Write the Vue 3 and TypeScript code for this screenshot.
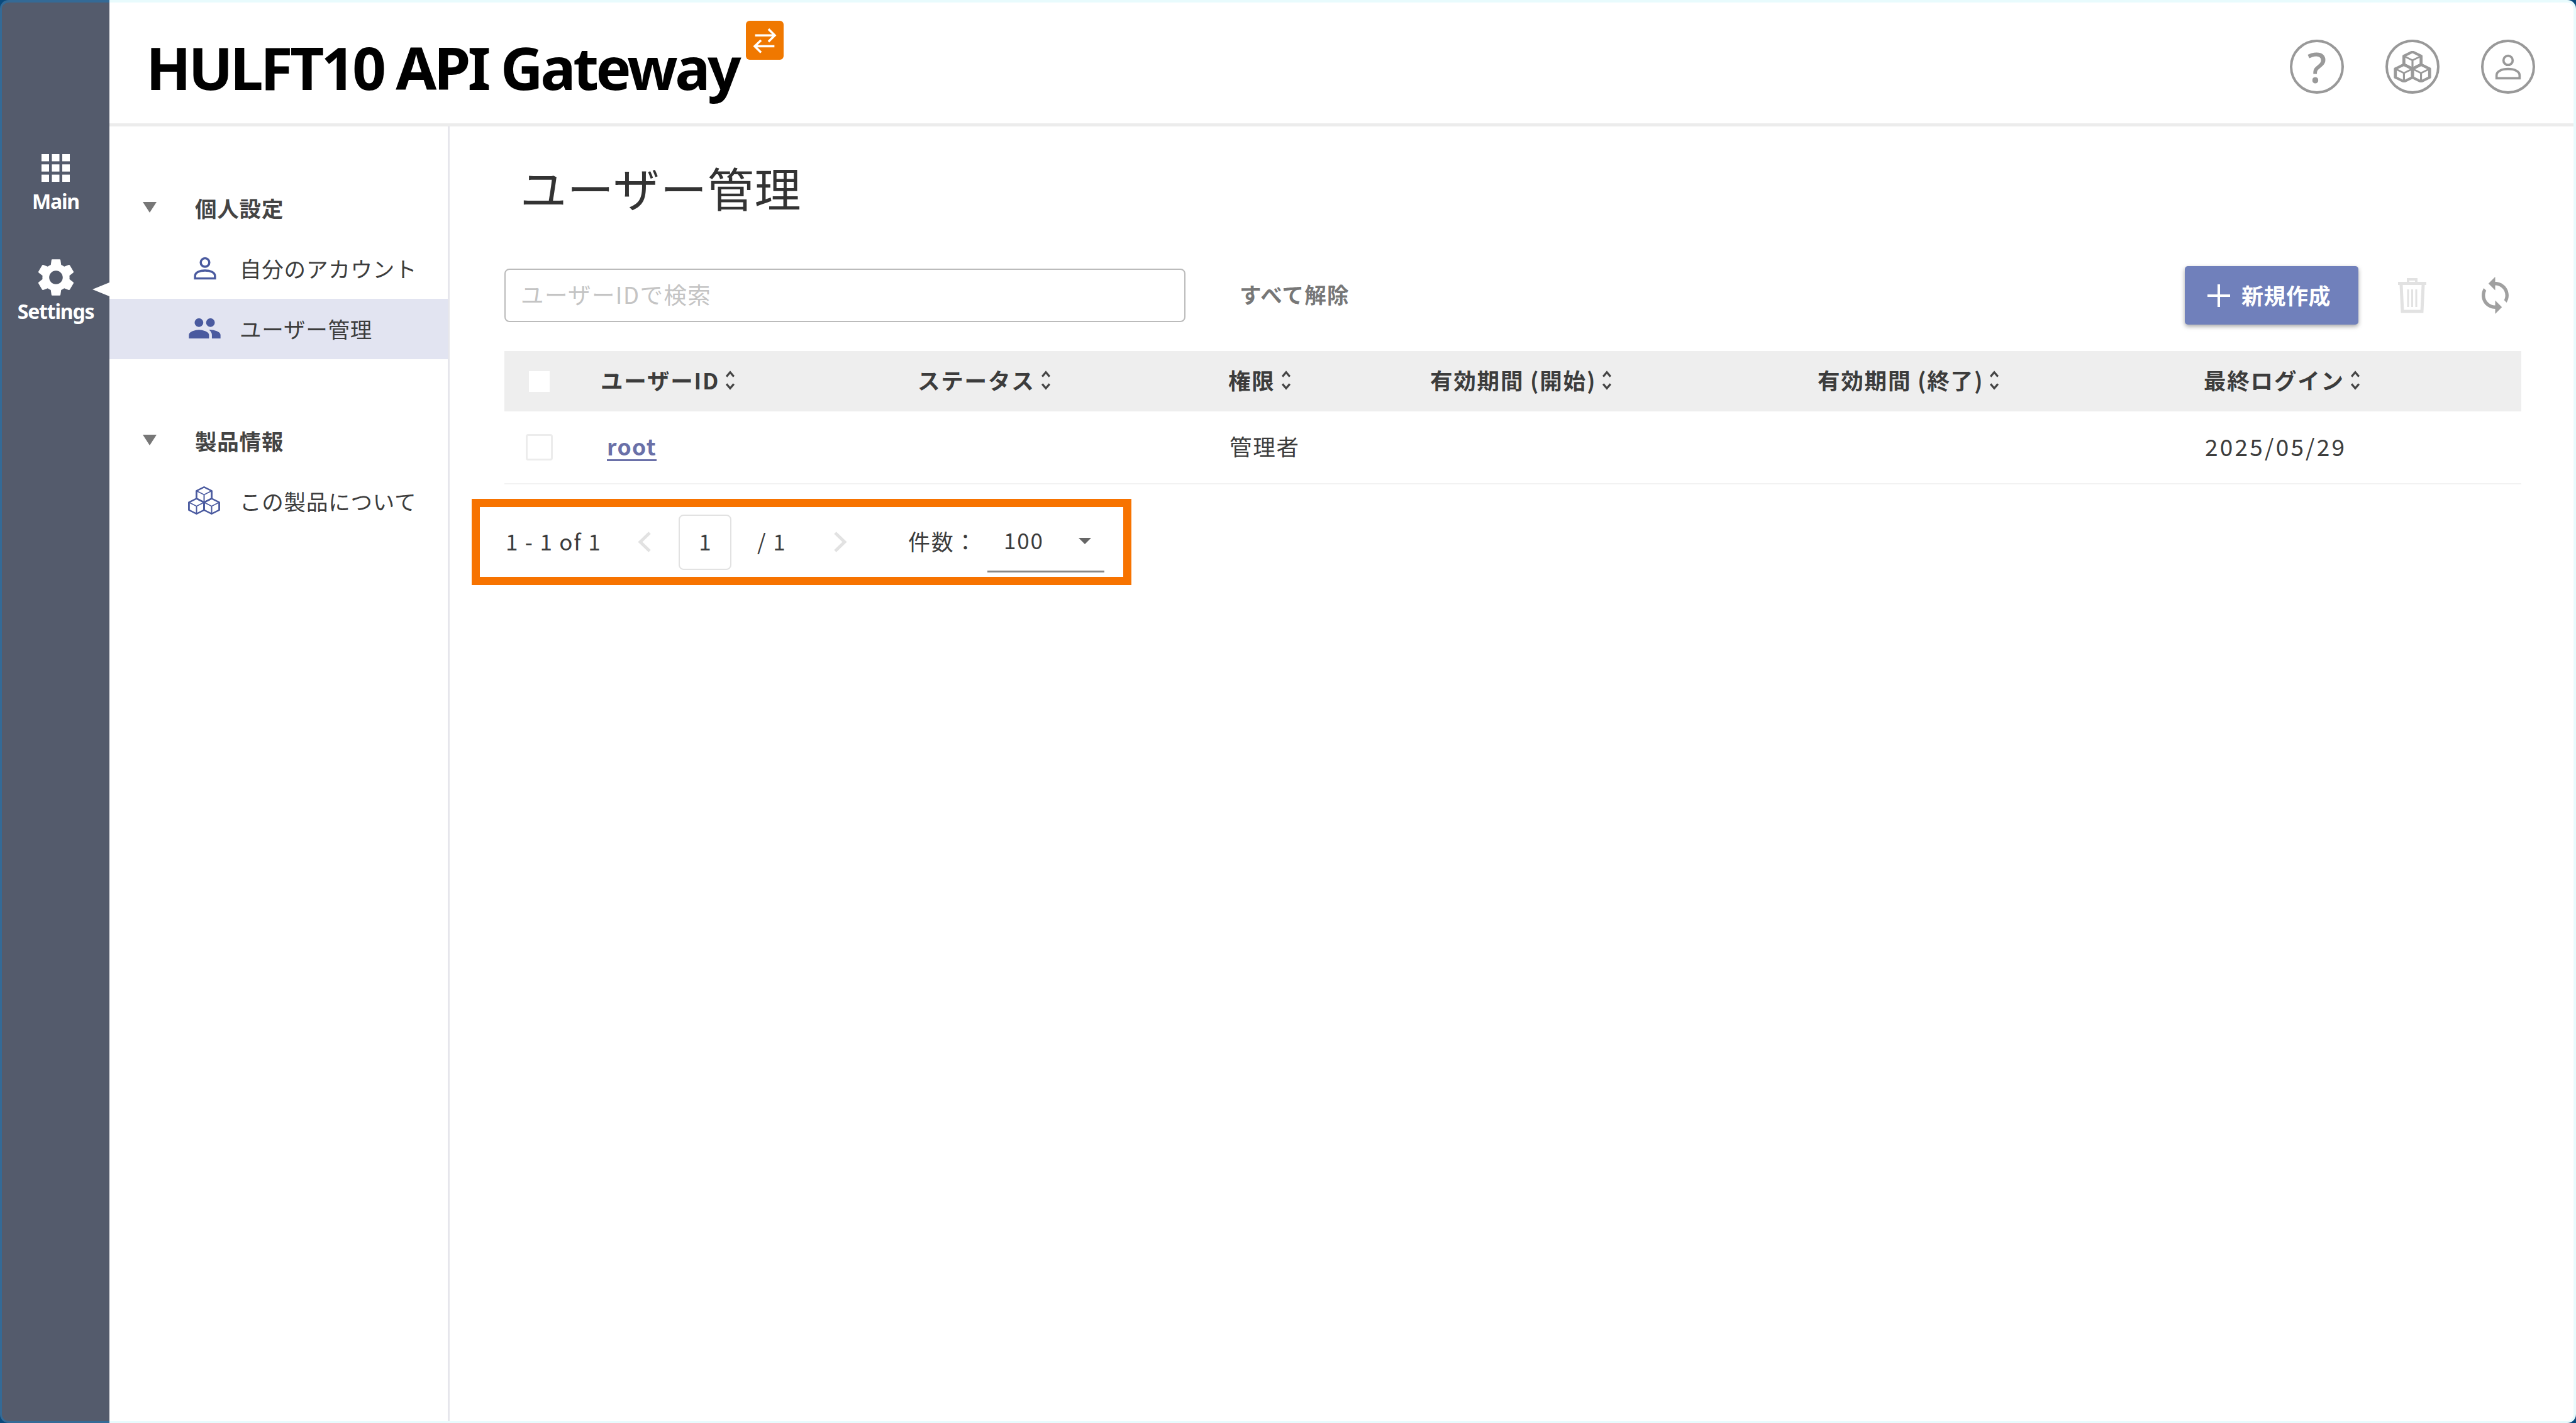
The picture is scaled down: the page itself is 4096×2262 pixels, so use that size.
<script setup lang="ts">
interface Column {
  label: string;
}

const columns: Column[] = [
  { label: "ユーザーID" },
  { label: "ステータス" },
  { label: "権限" },
  { label: "有効期間 (開始)" },
  { label: "有効期間 (終了)" },
  { label: "最終ログイン" },
];

// three cubes, stacked like a pyramid
const cubes = [
  { x: 20, y: 12 },
  { x: 11.4, y: 27 },
  { x: 28.6, y: 27 },
];
const r = 10;
const w = r * 0.866;

function hex(c: { x: number; y: number }) {
  return `M${c.x} ${c.y - r}L${c.x + w} ${c.y - r / 2}V${c.y + r / 2}L${c.x} ${c.y + r}L${c.x - w} ${c.y + r / 2}V${c.y - r / 2}Z`;
}
function inner(c: { x: number; y: number }) {
  return `M${c.x - w} ${c.y - r / 2}L${c.x} ${c.y}L${c.x + w} ${c.y - r / 2}M${c.x} ${c.y}V${c.y + r}`;
}

const gridCells = [0, 1, 2].flatMap((row) => [0, 1, 2].map((col) => ({ x: col * 16.5, y: row * 16.3 })));
const gear =
  "M19.14 12.94c.04-.3.06-.61.06-.94 0-.32-.02-.64-.07-.94l2.03-1.58c.18-.14.23-.41.12-.61l-1.92-3.32c-.12-.22-.37-.29-.59-.22l-2.39.96c-.5-.38-1.03-.7-1.62-.94l-.36-2.54c-.04-.24-.24-.41-.48-.41h-3.84c-.24 0-.43.17-.47.41l-.36 2.54c-.59.24-1.13.57-1.62.94l-2.39-.96c-.22-.08-.47 0-.59.22L2.74 8.87c-.12.21-.08.47.12.61l2.03 1.58c-.05.3-.09.63-.09.94s.02.64.07.94l-2.03 1.58c-.18.14-.23.41-.12.61l1.92 3.32c.12.22.37.29.59.22l2.39-.96c.5.38 1.03.7 1.62.94l.36 2.54c.05.24.24.41.48.41h3.84c.24 0 .44-.17.47-.41l.36-2.54c.59-.24 1.13-.56 1.62-.94l2.39.96c.22.08.47 0 .59-.22l1.92-3.32c.12-.22.07-.47-.12-.61l-2.01-1.58zM12 15.6c-1.98 0-3.6-1.62-3.6-3.6s1.62-3.6 3.6-3.6 3.6 1.62 3.6 3.6-1.62 3.6-3.6 3.6z";
const people =
  "M16 11c1.66 0 2.99-1.34 2.99-3S17.66 5 16 5c-1.66 0-3 1.34-3 3s1.34 3 3 3zm-8 0c1.66 0 2.99-1.34 2.99-3S9.66 5 8 5C6.34 5 5 6.34 5 8s1.34 3 3 3zm0 2c-2.33 0-7 1.17-7 3.5V19h14v-2.5c0-2.33-4.67-3.5-7-3.5zm8 0c-.29 0-.62.02-.97.05 1.16.84 1.97 1.97 1.97 3.45V19h6v-2.5c0-2.33-4.67-3.5-7-3.5z";
const sync =
  "M12 4V1L8 5l4 4V6c3.31 0 6 2.69 6 6 0 1.01-.25 1.97-.7 2.8l1.46 1.46C19.54 15.03 20 13.57 20 12c0-4.42-3.58-8-8-8zm0 14c-3.31 0-6-2.69-6-6 0-1.01.25-1.97.7-2.8L5.24 7.74C4.46 8.97 4 10.43 4 12c0 4.42 3.58 8 8 8v3l4-4-4-4v3z";
</script>

<template>
  <div class="frame">
    <aside class="rail">
      <div class="rail-item main-item">
        <svg class="grid-icon" viewBox="0 0 45 44">
          <rect v-for="(c, i) in gridCells" :key="i" :x="c.x" :y="c.y" width="12" height="11.4" fill="#fff" />
        </svg>
        <span>Main</span>
      </div>
      <div class="rail-item settings-item">
        <svg class="gear-icon" viewBox="2.5 2 19 20"><path :d="gear" fill="#fff" /></svg>
        <span>Settings</span>
        <i class="pointer"></i>
      </div>
    </aside>

    <div class="main">
      <header class="topbar">
        <div class="logo">
          <span class="logo-text">HULFT10 API Gateway</span>
          <span class="badge">
            <svg viewBox="0 0 40 44" fill="none" stroke="#fff" stroke-width="3">
              <path d="M7 15.5H33M25 7l8.5 8.5L25 24" />
              <path d="M33 30H7M15 22l-8.500 8L15 38.500" />
            </svg>
          </span>
        </div>
        <div class="top-icons">
          <div class="circle"><span class="question">?</span></div>
          <div class="circle">
            <svg class="cubes-top" viewBox="1 1 38 37" preserveAspectRatio="none" fill="none" stroke="#999" stroke-width="3" stroke-linejoin="round">
              <template v-for="(c, i) in cubes" :key="i">
                <path :d="hex(c)" />
                <path :d="inner(c)" stroke-width="2" />
              </template>
            </svg>
          </div>
          <div class="circle">
            <svg class="person-top" viewBox="0 0 24 24" fill="none" stroke="#999" stroke-width="2">
              <circle cx="12" cy="6.500" r="4" />
              <path d="M2 22v-2.500c0-3.500 4.500-5.500 10-5.500s10 2 10 5.500V22z" />
            </svg>
          </div>
        </div>
      </header>

      <div class="body">
        <nav class="side">
          <div class="side-title"><i class="caret"></i>個人設定</div>
          <div class="side-row">
            <span class="side-icon">
              <svg class="person" viewBox="0 0 24 24" fill="none" stroke="#4a5a9f" stroke-width="2.200">
                <circle cx="12" cy="6.500" r="4.300" />
                <path d="M2 22.500v-2.500c0-3.500 4.500-5.500 10-5.500s10 2 10 5.500v2.500z" />
              </svg>
            </span>
            自分のアカウント
          </div>
          <div class="side-row active">
            <span class="side-icon">
              <svg class="people" viewBox="1 5 22 14"><path :d="people" fill="#4a5a9f" /></svg>
            </span>
            ユーザー管理
          </div>
          <div class="side-title second"><i class="caret"></i>製品情報</div>
          <div class="side-row">
            <span class="side-icon">
              <svg class="cubes" viewBox="1 1 38 37" preserveAspectRatio="none" fill="none" stroke="#4a5a9f" stroke-width="2" stroke-linejoin="round">
                <template v-for="(c, i) in cubes" :key="i">
                  <path :d="hex(c)" />
                  <path :d="inner(c)" stroke-width="1.400" />
                </template>
              </svg>
            </span>
            この製品について
          </div>
        </nav>

        <main class="content">
          <h1>ユーザー管理</h1>

          <div class="toolbar">
            <input class="search" type="text" placeholder="ユーザーIDで検索" />
            <span class="clear">すべて解除</span>
            <button class="create">
              <svg viewBox="0 0 36 36" stroke="#fff" stroke-width="4"><path d="M18 0V36M0 18H36" /></svg>
              <span class="create-label">新規作成</span>
            </button>
            <svg class="trash" viewBox="0 0 47 57" fill="none" stroke="#e2e2e2">
              <path d="M17 7V3h13v4" stroke-width="4" />
              <path d="M1 9.500h45" stroke-width="5" />
              <path d="M6 12l2 42h31l2-42" stroke-width="5" />
              <path d="M17 19v28M23.500 19v28M30 19v28" stroke-width="3" />
            </svg>
            <svg class="refresh" viewBox="4 1 16 22"><path :d="sync" fill="#a0a0a0" /></svg>
          </div>

          <div class="table">
            <div class="row head">
              <div class="check-cell"><span class="check plain"></span></div>
              <div v-for="col in columns" :key="col.label" class="cell">
                <span class="lift">{{ col.label }}</span>
                <svg class="sort" viewBox="0 0 18 31" fill="none" stroke="#444" stroke-width="3">
                  <path d="M3.500 10L9 3.500l5.500 6.500M3.500 21L9 27.500l5.500-6.500" />
                </svg>
              </div>
            </div>
            <div class="row line">
              <div class="check-cell"><span class="check"></span></div>
              <div class="cell"><a class="link lift">root</a></div>
              <div class="cell"></div>
              <div class="cell nudge"><span class="lift">管理者</span></div>
              <div class="cell"></div>
              <div class="cell"></div>
              <div class="cell nudge date"><span class="lift">2025/05/29</span></div>
            </div>
          </div>

          <div class="pager">
            <span class="lift">1 - 1 of 1</span>
            <svg class="chev" viewBox="0 0 23 33" fill="none" stroke="#e2e2e2" stroke-width="5"><path d="M20 2L5 16.500 20 31" /></svg>
            <span><input class="page" type="text" value="1" /></span>
            <span class="lift">/ 1</span>
            <svg class="chev" viewBox="0 0 23 33" fill="none" stroke="#e2e2e2" stroke-width="5"><path d="M3 2l15 14.500L3 31" /></svg>
            <span class="lift">件数：</span>
            <div class="select"><span class="lift">100</span><i class="caret small"></i></div>
          </div>
        </main>
      </div>
    </div>
  </div>
</template>

<style scoped>
.frame {
  width: 4096px;
  height: 2262px;
  display: flex;
  background: #0b4a7c;
  overflow: hidden;
  font-family: "Noto Sans CJK JP", "Noto Sans", sans-serif;
  color: #3c3c3c;
}

.lift {
  margin-bottom: 5px;
}

.rail {
  width: 174px;
  flex: none;
  box-sizing: border-box;
  padding-top: 241px;
  background: #545b6c;
  border: solid #346a96;
  border-width: 4px 0 3px 3px;
  border-radius: 14px 0 0 14px;
  display: flex;
  flex-direction: column;
  font-family: "Noto Sans", sans-serif;
  font-weight: 700;
  color: #fff;
}

.rail-item {
  position: relative;
  display: flex;
  flex-direction: column;
  align-items: center;
  font-size: 32px;
  letter-spacing: -1.2px;
  line-height: 40px;
}

.grid-icon {
  width: 45px;
  height: 44px;
  margin-bottom: 11px;
}

.settings-item {
  margin-top: 71px;
}

.gear-icon {
  width: 58px;
  height: 60px;
  margin-bottom: 4px;
}

.pointer {
  position: absolute;
  right: 0;
  top: 38px;
  border-style: solid;
  border-width: 11px 27px 11px 0;
  border-color: transparent #fff transparent transparent;
}

.main {
  flex: 1;
  min-width: 0;
  display: flex;
  flex-direction: column;
  background: #fff;
  border: solid #e8fbfd;
  border-width: 4px 4px 3px 0;
  border-radius: 0 14px 14px 0;
}

.topbar {
  height: 192px;
  flex: none;
  border-bottom: 5px solid #ececec;
  padding: 0 61px 0 58px;
  display: flex;
  align-items: center;
  justify-content: space-between;
}

.logo {
  display: flex;
  align-items: flex-start;
  align-self: flex-start;
  padding-top: 29px;
}

.logo-text {
  margin-top: 19px;
  font-family: "Noto Sans", sans-serif;
  font-weight: 700;
  font-size: 94px;
  line-height: 110px;
  letter-spacing: -4.5px;
  color: #000;
  white-space: nowrap;
}

.badge {
  width: 60px;
  height: 62px;
  margin-left: 12px;
  border-radius: 6px;
  background: #f07800;
  display: flex;
  align-items: center;
  justify-content: center;
}

.badge svg {
  width: 48px;
  height: 52px;
}

.top-icons {
  display: flex;
  gap: 66px;
  margin-top: 12px;
}

.circle {
  width: 86px;
  height: 86px;
  box-sizing: border-box;
  border: 4px solid #999;
  border-radius: 50%;
  display: flex;
  align-items: center;
  justify-content: center;
}

.question {
  font-family: "Noto Sans", sans-serif;
  font-size: 68px;
  font-weight: 500;
  line-height: 1;
  color: #999;
}

.cubes-top {
  width: 60px;
  height: 50px;
}

.person-top {
  width: 44px;
  height: 48px;
}

.body {
  flex: 1;
  min-height: 0;
  display: flex;
}

.side {
  width: 541px;
  flex: none;
  box-sizing: border-box;
  padding-top: 82px;
  border-right: 3px solid #e6e6ec;
  font-size: 34.5px;
  letter-spacing: 0.8px;
}

.side-title {
  height: 96px;
  box-sizing: border-box;
  padding: 0 0 3px 53px;
  display: flex;
  align-items: center;
  font-weight: 700;
  color: #444;
}

.side-title.second {
  margin-top: 82px;
}

.caret {
  width: 0;
  height: 0;
  border-style: solid;
  border-width: 17px 11.5px 0;
  border-color: #777 transparent transparent;
  margin-right: 61px;
}

.caret.small {
  border-width: 10px 10.5px 0;
  margin: 0 0 0 auto;
  border-top-color: #666;
}

.side-row {
  height: 96px;
  box-sizing: border-box;
  padding: 0 0 3px 126px;
  display: flex;
  align-items: center;
}

.side-row.active {
  background: #e2e4f1;
}

.side-icon {
  width: 81px;
  flex: none;
  display: flex;
  align-items: center;
}

.person {
  width: 38px;
  height: 38px;
  margin-left: 7px;
}

.people {
  width: 51px;
  height: 32px;
}

.cubes {
  width: 53px;
  height: 45px;
  margin-left: -2px;
}

.content {
  flex: 1;
  min-width: 0;
  box-sizing: border-box;
  padding: 46px 83px 0 87px;
}

h1 {
  margin: 0 0 0 25px;
  height: 100px;
  font-size: 74px;
  line-height: 100px;
  font-weight: 400;
  letter-spacing: 0.8px;
  color: #333;
}

.toolbar {
  margin-top: 76px;
  height: 93px;
  display: flex;
  align-items: center;
  padding: 0 19px 0 0;
}

.search {
  width: 1083px;
  height: 85px;
  box-sizing: border-box;
  padding: 0 24px 4px;
  border: 2px solid #bbb;
  border-radius: 8px;
  font-family: inherit;
  font-size: 36.5px;
  letter-spacing: 1.4px;
  outline: none;
}

.search::placeholder {
  color: #c4c4c4;
}

.clear {
  margin: 0 0 5px 86px;
  font-size: 34.5px;
  letter-spacing: 1.2px;
  font-weight: 700;
  color: #777;
}

.create {
  margin-left: auto;
  width: 276px;
  height: 93px;
  box-sizing: border-box;
  padding: 0 0 0 36px;
  border: none;
  border-radius: 5px;
  background: #7080bb;
  box-shadow: 0 3px 7px rgba(0, 0, 0, 0.35);
  display: flex;
  align-items: center;
  gap: 18px;
  font-family: inherit;
  font-size: 35px;
  font-weight: 700;
  letter-spacing: 0.5px;
  color: #fff;
}

.create svg {
  width: 36px;
  height: 36px;
}

.create-label {
  margin-bottom: 3px;
}

.trash {
  width: 47px;
  height: 57px;
  margin-left: 62px;
}

.refresh {
  width: 45px;
  height: 59px;
  margin-left: 86px;
}

.table {
  margin-top: 42px;
}

.row {
  display: grid;
  grid-template-columns: 153px 504px 494px 321px 616px 614px 1fr;
  align-items: center;
}

.head {
  height: 96px;
  background: #eee;
  font-weight: 700;
}

.line {
  height: 114px;
  border-bottom: 2px solid #f2f2f2;
}

.cell {
  display: flex;
  align-items: center;
  font-size: 35.5px;
  letter-spacing: 1.8px;
  white-space: nowrap;
}

.nudge {
  padding-left: 2px;
}

.date {
  font-size: 37px;
  letter-spacing: 3.200px;
}

.sort {
  width: 20px;
  height: 33px;
  margin: 0 0 3px 7px;
}

.check-cell {
  width: 110px;
  display: flex;
  justify-content: center;
}

.check {
  width: 43px;
  height: 42px;
  box-sizing: border-box;
  border: 3px solid #ececec;
  border-radius: 4px;
  background: #fff;
}

.check.plain {
  width: 33px;
  height: 33px;
  border: none;
  border-radius: 0;
}

.link {
  padding-left: 10px;
  color: #6a70a8;
  font-weight: 700;
  letter-spacing: 1.4px;
  text-decoration: underline;
  text-underline-offset: 6px;
}

.pager {
  margin: 23px 0 0 -52px;
  width: 1049px;
  height: 137px;
  box-sizing: border-box;
  border: 13px solid #f77300;
  padding: 0 30px 0 41px;
  display: grid;
  grid-template-columns: 209px 66px 125px 121px 119px 126px 186px;
  align-items: center;
  font-size: 35px;
  letter-spacing: 1.800px;
}

.chev {
  width: 23px;
  height: 33px;
}

.page {
  width: 84px;
  height: 88px;
  box-sizing: border-box;
  padding-bottom: 5px;
  border: 2px solid #e2e2e2;
  border-radius: 8px;
  text-align: center;
  font-family: inherit;
  font-size: 35px;
  color: inherit;
  outline: none;
  display: block;
}

.select {
  height: 97px;
  box-sizing: border-box;
  border-bottom: 3px solid #888;
  padding: 0 21px 0 26px;
  display: flex;
  align-items: center;
}
</style>

<style>
html,
body {
  margin: 0;
  overflow: hidden;
}
</style>
